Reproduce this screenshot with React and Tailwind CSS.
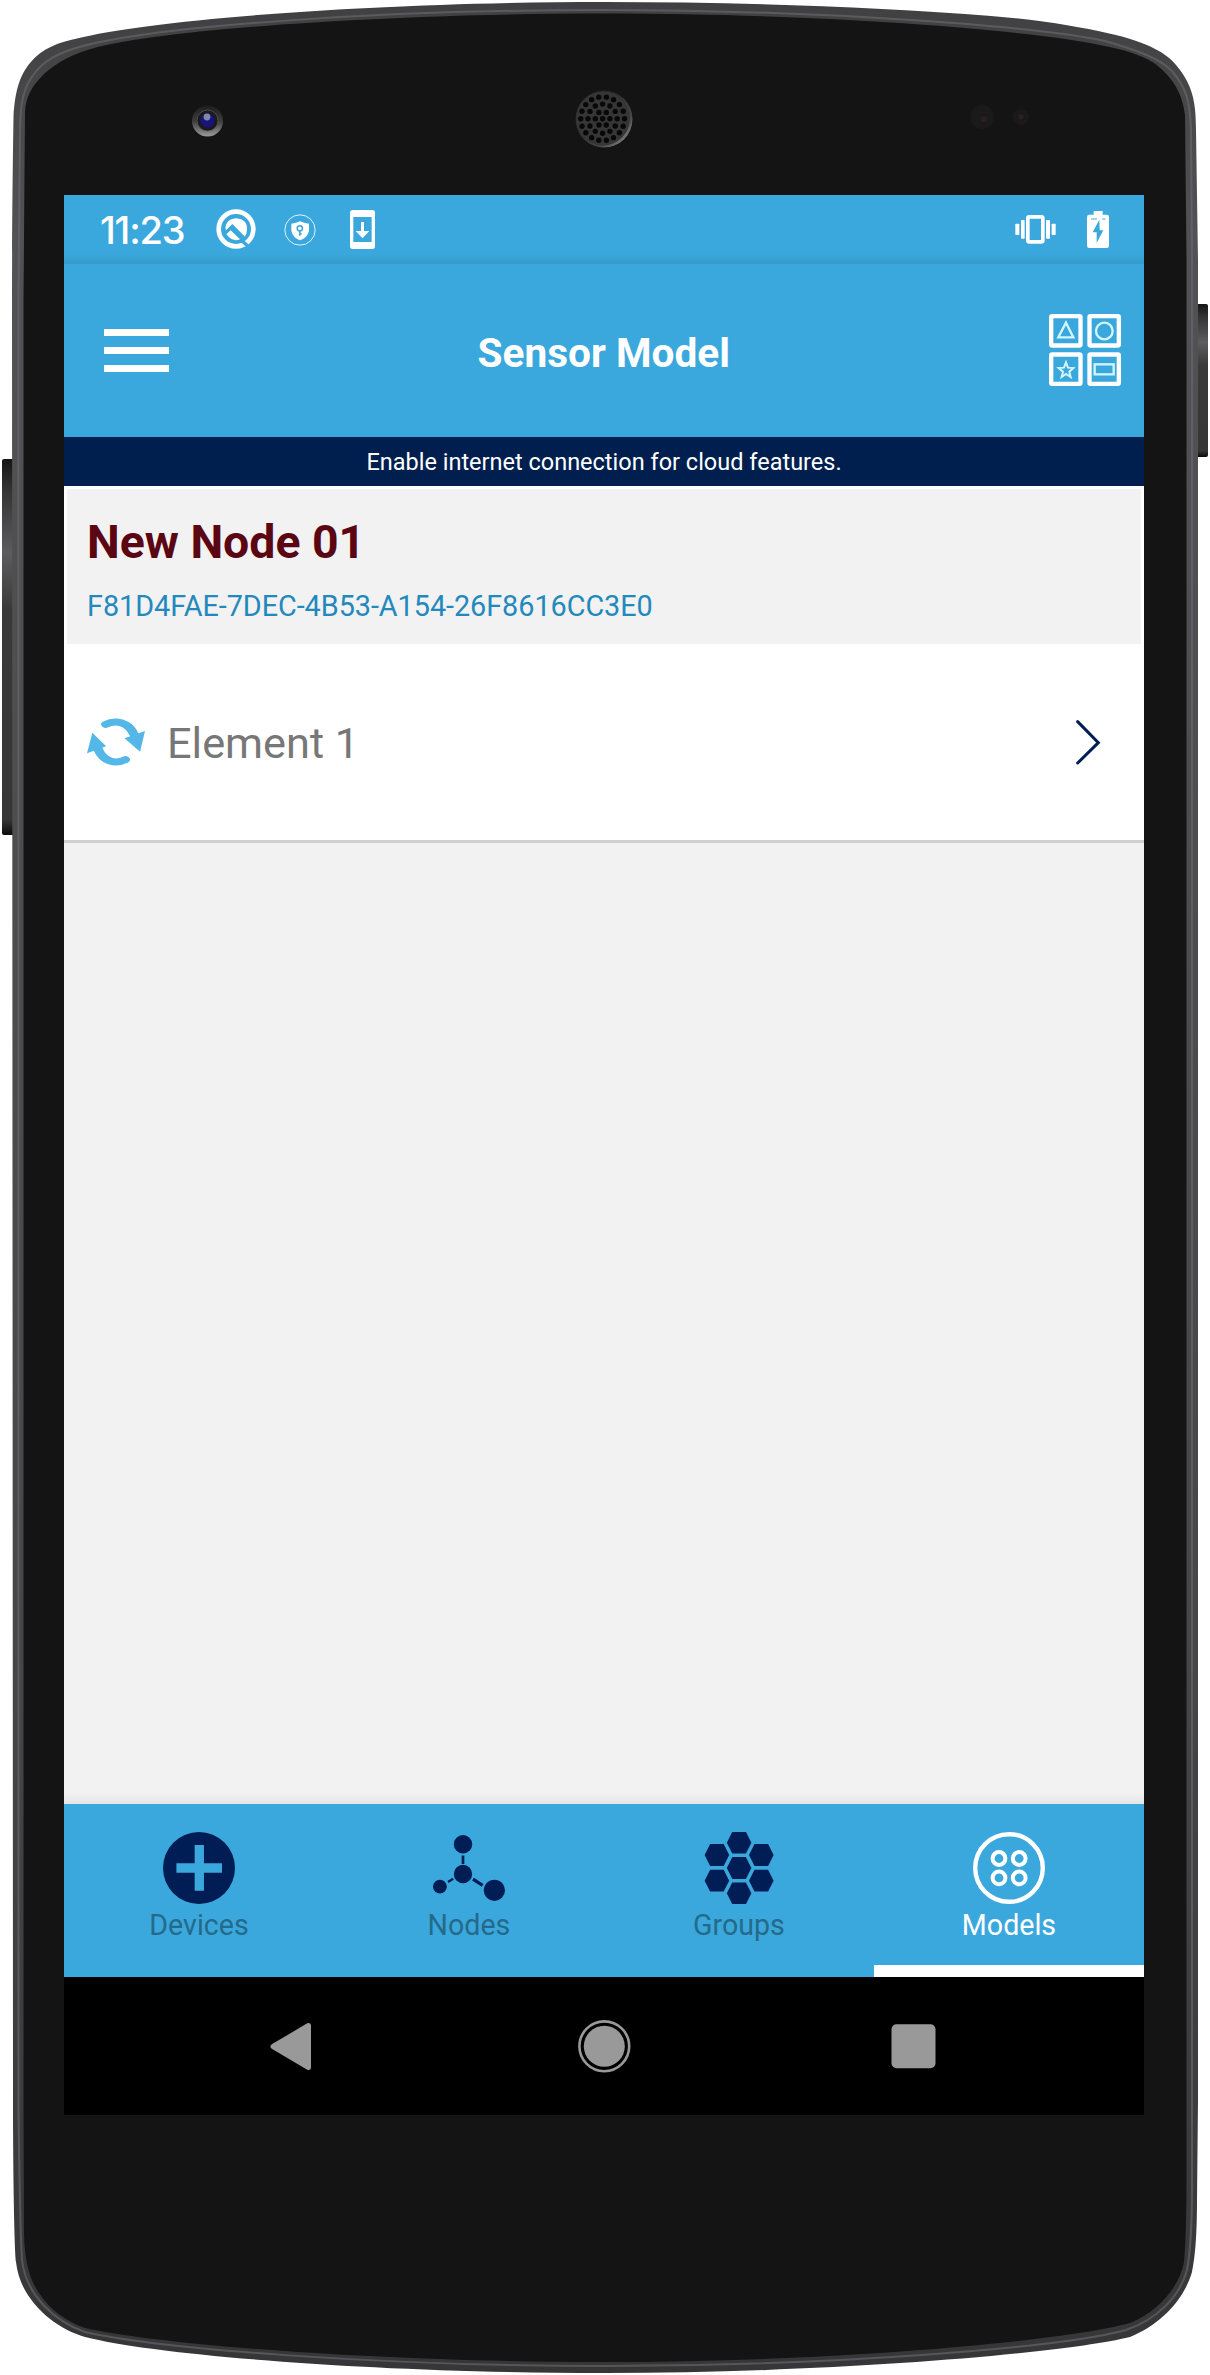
import React from "react";

const HOLES = [1, 2, 3].flatMap((ring) =>
  Array.from({ length: ring * 6 }, (_, i) => {
    const a = (i * Math.PI * 2) / (ring * 6);
    const r = ring * 7.3;
    return { x: 602.6 + r * Math.cos(a), y: 118.7 + r * Math.sin(a) };
  })
).concat({ x: 602.6, y: 118.7 });

function PhoneBody() {
  return (
    <svg className="absolute inset-0" width="1210" height="2375" viewBox="0 0 1210 2375" aria-hidden="true">
      <defs>
        <linearGradient id="rim" x1="0" y1="0" x2="0" y2="1">
          <stop offset="0" stopColor="#404042" />
          <stop offset="0.1" stopColor="#525256" />
          <stop offset="0.7" stopColor="#464648" />
          <stop offset="1" stopColor="#363638" />
        </linearGradient>
        <linearGradient id="key" x1="0" y1="0" x2="0" y2="1">
          <stop offset="0" stopColor="#151515" />
          <stop offset="0.08" stopColor="#333334" />
          <stop offset="0.25" stopColor="#5c5c5e" />
          <stop offset="0.4" stopColor="#3a3a3a" />
          <stop offset="0.96" stopColor="#363637" />
          <stop offset="1" stopColor="#0a0a0a" />
        </linearGradient>
        <linearGradient id="lens" x1="0" y1="0" x2="0" y2="1">
          <stop offset="0" stopColor="#1d1d1d" />
          <stop offset="0.5" stopColor="#3c3c3c" />
          <stop offset="1" stopColor="#9a9a9a" />
        </linearGradient>
        <linearGradient id="mesh" x1="0" y1="0" x2="1" y2="1">
          <stop offset="0.1" stopColor="#1b1b1b" />
          <stop offset="0.7" stopColor="#444" />
          <stop offset="1" stopColor="#a0a0a0" />
        </linearGradient>
      </defs>
      <rect x="2" y="459" width="14" height="376" rx="2" fill="url(#key)" />
      <rect x="1194" y="304" width="14" height="153" rx="2" fill="url(#key)" />
      <path
        d="M605 2 C740 2 880 7 991 16 C1040 20 1080 27 1107 33 C1150 42 1168 55 1176 65 C1192 84 1196 100 1196 130 L1198 260 L1198 2100 L1197 2200 C1197 2245 1194 2262 1192 2272 C1184 2300 1160 2325 1130 2337 C1060 2354 830 2373 605 2373 C380 2373 160 2356 85 2337 C54 2328 20 2300 16 2262 C14 2240 13 2150 13 2100 L12 300 C12 230 13 150 13.5 117 C15 90 20 75 30 63 C42 48 60 42 77 38.5 C150 20 370 2 605 2 Z"
        fill="url(#rim)"
      />
      <path
        d="M605 10 C385 10 165 25 83 46 C55 53 41 64 34 74 C24 87 21 100 20 125 L18.5 300 L18.5 2110 C19 2150 20 2230 22 2260 C26 2295 54 2321 85 2332 C160 2349 380 2366 605 2366 C830 2366 1060 2348 1126 2330 C1158 2319 1180 2296 1187 2270 C1190 2255 1192 2220 1192 2190 L1192 260 L1191 130 C1190 100 1186 88 1172 71 C1160 59 1140 51 1105 41 C1040 27 830 10 605 10 Z"
        fill="none"
        stroke="#6c6c70"
        strokeWidth="2"
        opacity="0.6"
      />
      <path
        d="M605 13.500 C420 13.500 240 25 154 37 C125 41 110 44 96 47.500 C72 54 56 63 44 74 C32 86 26 96 25 112 L23.500 300 L23.500 2110 L24 2233 C24.500 2262 30 2280 39 2293 C50 2310 66 2321 85 2328 C160 2345 380 2362 605 2362 C830 2362 1060 2342 1130 2323 C1160 2311 1180 2285 1184 2262 C1186 2245 1186.500 2210 1186.500 2180 L1186.500 260 L1185 115 C1182 90 1170 75 1154 63 C1140 54 1120 49 1105 46 C1040 31 830 13.500 605 13.500 Z"
        fill="#141414"
      />
      <ellipse cx="207.500" cy="121" rx="15.500" ry="15.500" fill="url(#lens)" />
      <circle cx="207.500" cy="120.500" r="10.500" fill="#1a1a1c" stroke="#555" strokeWidth="0.800" />
      <circle cx="207.500" cy="120.500" r="7" fill="#17147c" />
      <circle cx="207" cy="117" r="3.400" fill="#8088a4" />
      <circle cx="604" cy="119" r="28.500" fill="url(#mesh)" />
      <circle cx="603" cy="118.500" r="27" fill="#363636" />
      {HOLES.map((h, i) => (
        <circle key={i} cx={h.x} cy={h.y} r="2.700" fill="#080808" />
      ))}
      <circle cx="982" cy="117" r="12" fill="#1b1a1a" />
      <circle cx="984" cy="119" r="3" fill="#2a201d" />
      <circle cx="1021" cy="117" r="8" fill="#1b1a1a" />
      <circle cx="1021" cy="117" r="2.500" fill="#2c211d" />
    </svg>
  );
}

function StatusBar() {
  return (
    <div className="flex h-[69px] shrink-0 items-start bg-[linear-gradient(to_bottom,#3aa8dc_86%,#359bcb)] text-white">
      <div className="ml-[36px] mt-[10px] w-[87px] whitespace-nowrap font-['Inter'] text-[38px] font-medium leading-[50px] tracking-[-1.2px]">11:23</div>
      <svg className="ml-[29px] mt-[14px]" width="40" height="40" viewBox="469 57 120 120" fill="white">
        <circle cx="529" cy="117" r="52" fill="none" stroke="white" strokeWidth="14" />
        <path d="M543 149 L580 182" stroke="#3aa8dc" strokeWidth="10" />
        <path d="M497 114 Q500 86 530 85 Q563 88 562 118 Q562 132 556 140 L518 102 L499 121 Z" />
        <path d="M513 121 L541 148 Q520 158 500 133 Z" />
      </svg>
      <svg className="ml-[28px] mt-[19px]" width="32" height="32" viewBox="671 70 96 96" fill="white">
        <circle cx="719" cy="118" r="45.500" fill="none" stroke="white" strokeWidth="3" opacity="0.85" />
        <path d="M693 99 Q708 98 719 92 Q731 98 746 99 V120 Q742 140 719 149 Q697 140 693 120 Z" />
        <circle cx="718.500" cy="113" r="8" fill="none" stroke="#3aa8dc" strokeWidth="4.500" />
        <path d="M718.500 120 V135 M718.500 129 H724" stroke="#3aa8dc" strokeWidth="4.500" fill="none" />
      </svg>
      <svg className="ml-[34px] mt-[15px]" width="25" height="39" viewBox="870 60 75 117" fill="white">
        <path fillRule="evenodd" d="M878 60 H937 Q945 60 945 68 V169 Q945 177 937 177 H878 Q870 177 870 169 V68 Q870 60 878 60 Z M880 81 V156 H935 V81 Z" />
        <path d="M903 96 H912 V123 H928 L907.500 145 L887 123 H903 Z" />
      </svg>
      <svg className="ml-auto mt-[20px]" width="41" height="29" viewBox="105 75 123 87" fill="white">
        <rect x="106" y="101" width="12" height="34" rx="2" />
        <rect x="123" y="90" width="11" height="56" rx="2" />
        <rect x="143.500" y="80.500" width="45" height="75" rx="4" fill="none" stroke="white" strokeWidth="11" />
        <rect x="198" y="90" width="12" height="56" rx="2" />
        <rect x="215" y="101" width="12" height="34" rx="2" />
      </svg>
      <svg className="ml-[31px] mr-[35px] mt-[16px]" width="22" height="37" viewBox="321 63 66 111" fill="white">
        <rect x="341" y="63" width="27" height="20" />
        <rect x="321" y="74" width="66" height="100" rx="7" />
        <path d="M333 84 H351 V90 H333 Z M367 84 H376 V90 H367 Z" fill="#9fd4ee" />
        <path d="M358 89 L338 127 H350 V159 L370 121 H359 Z" fill="#3aa8dc" />
      </svg>
    </div>
  );
}

function AppBar() {
  return (
    <div className="flex h-[173px] shrink-0 items-center bg-[#3aa8dc] pl-[39.5px] pr-[23px]">
      <div className="flex w-[72px] flex-col gap-[11px]">
        <div className="h-[7px] w-[65px] bg-white" />
        <div className="h-[7px] w-[65px] bg-white" />
        <div className="h-[7px] w-[65px] bg-white" />
      </div>
      <h1 className="mt-[4px] flex-1 whitespace-nowrap pr-[17px] text-center text-[40.6px] font-bold leading-[48px] text-white">Sensor Model</h1>
      <svg className="-mt-[2px]" width="72" height="72" viewBox="207 372 216 216" fill="none">
        <g strokeWidth="13" stroke="white">
          <rect x="213.500" y="378.500" width="88" height="88" rx="3" />
          <rect x="328.500" y="378.500" width="88" height="88" rx="3" />
          <rect x="213.500" y="493.500" width="88" height="88" rx="3" />
          <rect x="328.500" y="493.500" width="88" height="88" rx="3" />
        </g>
        <g strokeWidth="7" stroke="#d3f5ff">
          <path d="M258 398 L280 442 H235 Z" />
          <circle cx="373" cy="423" r="25" />
          <path d="M258 517 L264 533 L280 534 L268 545 L272 561 L258 552 L245 561 L249 545 L236 534 L252 533 Z" strokeWidth="6" />
          <rect x="344" y="523" width="57" height="30" />
        </g>
      </svg>
    </div>
  );
}

const navy = "#001d55";

const TABS = [
  {
    label: "Devices",
    icon: (
      <g>
        <circle cx="36" cy="36" r="36" fill={navy} />
        <path d="M36.300 13 V58.700 M13.400 36 H59" stroke="#3aa8dc" strokeWidth="9.300" />
      </g>
    ),
  },
  {
    label: "Nodes",
    icon: (
      <g fill={navy} stroke="none">
        <circle cx="30" cy="12.300" r="9.200" />
        <circle cx="30" cy="42" r="9.200" />
        <circle cx="6.900" cy="54.700" r="6.900" />
        <circle cx="61.400" cy="58.300" r="10.600" />
        <path d="M30 23.500 V32" stroke={navy} strokeWidth="2.700" />
        <path d="M15 50 L20.200 46.800" stroke={navy} strokeWidth="2.200" />
        <path d="M40 47.200 L49.600 53.400" stroke={navy} strokeWidth="3.200" />
      </g>
    ),
  },
  {
    label: "Groups",
    icon: (
      <g fill={navy}>
        {[[36.1, 10.7], [13.9, 23], [58.3, 23], [36.1, 36], [13.9, 48.7], [58.3, 48.7], [36.1, 61.3]].map(([x, y]) => (
          <path key={x + "-" + y} transform={`translate(${x} ${y})`} d="M-12.300 0 L-6.800 -10.900 H6.800 L12.300 0 L6.800 10.900 H-6.800 Z" />
        ))}
      </g>
    ),
  },
  {
    label: "Models",
    active: true,
    icon: (
      <g fill="none" stroke="white">
        <circle cx="36" cy="36" r="33.800" strokeWidth="4.400" />
        <g strokeWidth="4">
          <circle cx="26" cy="26.500" r="6.400" />
          <circle cx="46.200" cy="26.500" r="6.400" />
          <circle cx="26" cy="45.900" r="6.400" />
          <circle cx="46.200" cy="45.900" r="6.400" />
        </g>
      </g>
    ),
  },
];

function TabBar() {
  return (
    <div className="grid h-[173px] shrink-0 grid-cols-4 bg-[#3aa8dc]">
      {TABS.map((t) => (
        <div key={t.label} className={t.active ? "flex flex-col items-center border-b-[12px] border-white pt-[28px] text-white" : "flex flex-col items-center pt-[28px] text-[#256a8a]"}>
          <svg width="72" height="72" viewBox="0 0 72 72">{t.icon}</svg>
          <span className="mt-[4px] text-[28.6px] leading-[35px]">{t.label}</span>
        </div>
      ))}
    </div>
  );
}

export default function App() {
  return (
    <div className="relative h-[2375px] w-[1210px] overflow-hidden bg-white pl-[64px] pt-[195px] font-['Roboto',sans-serif]">
      <PhoneBody />
      <div className="relative flex h-[1920px] w-[1080px] flex-col overflow-hidden bg-[#f2f2f2]">
        <StatusBar />
        <AppBar />
        <div className="h-[49px] shrink-0 bg-[#001f4f] text-center text-[23.5px] leading-[51px] text-white">Enable internet connection for cloud features.</div>
        <div className="h-[158px] shrink-0 border-[3px] border-b-0 border-white bg-[#f2f2f2] pl-[20px] pt-[27px]">
          <h2 className="text-[46.4px] font-bold leading-[52px] text-[#5a0613]">New Node 01</h2>
          <p className="mt-[21px] text-[28.8px] leading-[34px] tracking-[-0.04px] text-[#2389bd]">F81D4FAE-7DEC-4B53-A154-26F8616CC3E0</p>
        </div>
        <div className="flex h-[199px] shrink-0 items-center border-b-[3px] border-[#d0d0d0] bg-white pl-[23px] pr-[43px]">
          <svg width="58" height="48" viewBox="195 864 130 144" preserveAspectRatio="none">
            <g fill="none" stroke="#54b7e8" strokeWidth="21" strokeLinecap="round">
              <path d="M237 883 C260 868 288 878 300 912" />
              <path d="M281 989 C260 1003 232 996 220 958" />
            </g>
            <path d="M325 903 L314 965 L279 925 Z M195 970 L207 908 L238 949 Z" fill="#54b7e8" />
          </svg>
          <span className="ml-[22px] mt-[4px] text-[43.3px] leading-[50px] text-[#777777]">Element 1</span>
          <svg className="ml-auto" width="25" height="45" viewBox="229 299 75 135">
            <path d="M234 304 L296 367 L234 428" fill="none" stroke={navy} strokeWidth="9" strokeLinecap="round" />
          </svg>
        </div>
        <div className="mt-auto h-[12px] shrink-0 bg-[linear-gradient(to_bottom,#f2f2f2,#e6e6e6)]" />
        <TabBar />
        <div className="h-[138px] shrink-0 bg-black">
          <svg width="1080" height="138" viewBox="64 1977 1080 138" fill="#999999">
            <path d="M273 2046.500 L308.500 2025.500 V2067.500 Z" stroke="#999999" strokeWidth="5" strokeLinejoin="round" />
            <circle cx="604.300" cy="2046.300" r="20.500" />
            <circle cx="604.300" cy="2046.300" r="24.900" fill="none" stroke="#999999" strokeWidth="2.600" />
            <rect x="891.500" y="2024.300" width="44" height="44" rx="5" />
          </svg>
        </div>
      </div>
    </div>
  );
}
